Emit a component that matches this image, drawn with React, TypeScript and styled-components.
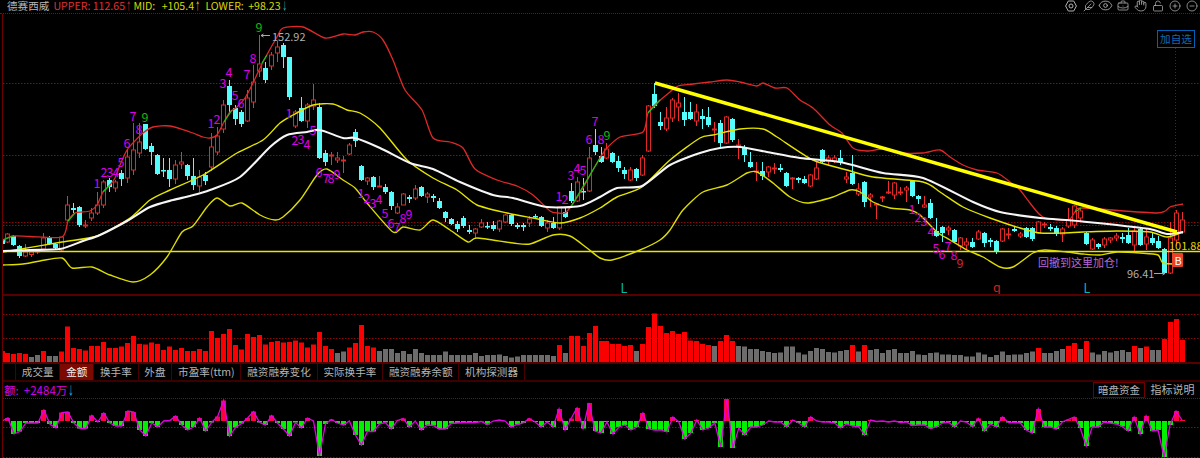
import React from 'react'
import styled, { createGlobalStyle } from 'styled-components'
import { Eye, Feather, Hand, LockOpen, BriefcaseBusiness, CirclePlus, CircleMinus } from 'lucide-react'

const FONT = '"Noto Sans CJK SC", "Noto Sans", sans-serif'
const GRID = '#8a0a0a'
const CYAN = '#54fcfc'
const RED = '#e02828'

// candle x in the picture
const barX = (i: number) => 1.5 + 5.99 * i

// high, body top, body bottom, low, up(1)/down(0) - screen y, not prices
type Candle = [number, number, number, number, number]
const candles: Candle[] = [
  [236, 240, 244, 246, 0], [233, 234, 242, 243, 1], [235, 236, 245, 246, 0], [245, 246, 256, 258, 0],
  [244, 252, 256, 257, 1], [250, 252, 254.5, 257, 1], [249, 251, 252, 254, 1], [233, 238, 249, 250, 1],
  [236, 237, 244, 245, 0], [243, 244, 248, 249, 0], [237, 237, 250, 252, 1], [196, 205, 220, 221, 1],
  [203, 208, 210, 213, 0], [206, 207, 225, 227, 0], [220, 225, 226, 228, 1], [208, 213, 218, 221, 1],
  [192, 205, 213, 215, 1], [180, 182, 205, 208, 1], [178, 180, 187, 192, 0], [180, 182, 188, 192, 1],
  [170, 173, 179, 186, 0], [149, 157, 178, 183, 1], [123, 150, 170, 175, 1], [123, 142, 153, 158, 1],
  [124, 124, 149, 150, 0], [143, 146, 152, 165, 0], [154, 155, 174, 175, 0], [158, 170, 171, 177, 0],
  [158, 170, 179, 187, 0], [160, 165, 179, 184, 1], [152, 162, 164, 169, 1], [164, 165, 176, 180, 0],
  [158, 176, 185, 190, 0], [170, 177, 186, 192, 1], [172, 175, 181, 185, 0], [133, 147, 167, 171, 1],
  [127, 136, 152, 155, 1], [100, 105, 129, 133, 1], [80, 86, 105, 112, 0], [105, 108, 119, 125, 0],
  [110, 112, 124, 127, 0], [90, 98, 121, 122, 1], [65, 82, 102, 108, 1], [35, 64, 71, 77, 1],
  [62, 68, 80, 83, 0], [52, 55, 66, 70, 1], [41, 47, 53, 62, 1], [43, 45, 57, 68, 0],
  [57, 57, 97, 100, 0], [110, 112, 126, 128, 1], [97, 108, 121, 122, 0], [103, 105, 121, 128, 1],
  [84, 100, 106, 110, 1], [103, 107, 158, 159, 0], [150, 153, 162, 166, 0], [152, 155, 156, 165, 1],
  [152, 158, 160, 163, 1], [156, 160, 161, 173, 1], [143, 145, 154, 155, 1], [129, 132, 141, 147, 0],
  [165, 166, 180, 181, 0], [177, 178, 181, 185, 1], [176, 177, 187, 190, 0], [176, 186, 187, 187, 1],
  [184, 187, 192, 194, 0], [191, 192, 206, 210, 0], [203, 207, 213, 214, 1], [193, 194, 205, 205, 1],
  [195, 197, 199, 203, 0], [185, 189, 198, 200, 1], [186, 187, 196, 197, 0], [192, 194, 197, 203, 1],
  [194, 196, 198, 202, 0], [198, 201, 208, 209, 0], [211, 212, 218, 222, 0], [218, 219, 224, 225, 0],
  [221, 224, 229, 232, 0], [216, 218, 226, 228, 0], [225, 230, 232, 234, 0], [228, 229, 233, 238, 1],
  [219, 223, 227, 228, 1], [222, 226, 227, 229, 0], [221, 225, 229, 231, 0], [220, 221, 229, 232, 1],
  [214, 215, 222, 223, 1], [214, 215, 224, 226, 0], [223, 225, 227, 229, 0], [223, 225, 227, 231, 0],
  [216, 219, 223, 227, 1], [214, 216, 217, 219, 0], [216, 217, 226, 227, 0], [220, 223, 228, 232, 1],
  [217, 223, 228, 229, 0], [207, 207, 228, 230, 1], [207, 212, 217, 218, 0], [183, 191, 201, 203, 0],
  [177, 182, 201, 202, 1], [178, 191, 192, 200, 0], [147, 158, 191, 192, 1], [129, 145, 152, 155, 0],
  [147, 156, 162, 163, 0], [143, 149, 158, 159, 1], [152, 153, 162, 163, 0], [156, 161, 168, 172, 0],
  [167, 170, 174, 179, 0], [167, 170, 180, 181, 1], [168, 169, 178, 181, 0], [155, 158, 175, 176, 1],
  [105, 106, 151, 152, 1], [83, 94, 106, 108, 0], [112, 122, 126, 130, 0], [107, 118, 129, 131, 1],
  [98, 100, 118, 122, 1], [93, 103, 107, 121, 1], [97, 112, 120, 126, 0], [102, 112, 119, 120, 0],
  [104, 112, 121, 126, 1], [109, 116, 119, 129, 0], [107, 117, 125, 127, 0], [122, 129, 130, 142, 1],
  [120, 123, 143, 147, 0], [116, 117, 143, 144, 1], [118, 119, 140, 142, 0], [139, 145, 146, 159, 1],
  [145, 148, 155, 162, 0], [152, 162, 167, 168, 0], [162, 171, 172, 181, 1], [162, 171, 176, 180, 0],
  [166, 167, 172, 177, 1], [163, 168, 169, 174, 1], [164, 168, 170, 172, 0], [172, 173, 186, 187, 0],
  [177, 178, 179, 189, 1], [177, 178, 180, 183, 0], [176, 179, 183, 184, 0], [174, 175, 186, 187, 1],
  [161, 168, 179, 180, 1], [149, 150, 162, 163, 0], [155, 158, 161, 166, 1], [155, 158, 161, 163, 1],
  [150, 158, 162, 165, 0], [172, 177, 179, 183, 1], [155, 173, 184, 185, 0], [183, 189, 194, 196, 1],
  [181, 182, 202, 207, 0], [193, 195, 197, 207, 1], [203, 204, 205, 219, 1], [196, 197, 198, 202, 1],
  [181, 192, 193, 194, 1], [182, 183, 195, 199, 1], [187, 192, 193, 195, 1], [186, 188, 190, 202, 1],
  [180, 181, 196, 197, 0], [195, 196, 199, 204, 0], [196, 205, 207, 208, 1], [199, 203, 218, 219, 0],
  [218, 231, 236, 237, 0], [226, 227, 233, 242, 0], [226, 228, 230, 235, 1], [229, 230, 242, 243, 0],
  [237, 238, 246, 250, 1], [238, 242, 245, 250, 1], [238, 242, 247, 248, 0], [230, 232, 239, 240, 1],
  [232, 233, 243, 247, 0], [238, 240, 242, 247, 0], [240, 241, 251, 254, 0], [228, 229, 241, 242, 1],
  [228, 234, 235, 239, 1], [227, 229, 231, 232, 0], [232, 234, 236, 238, 1], [227, 228, 237, 238, 0],
  [227, 228, 239, 241, 0], [221, 222, 233, 234, 1], [222, 224, 225, 228, 1], [224, 227, 229, 231, 0],
  [226, 228, 234, 236, 0], [227, 229, 234, 242, 1], [208, 220, 226, 228, 1], [205, 206, 225, 228, 1],
  [208, 211, 218, 222, 1], [232, 233, 244, 245, 0], [238, 240, 249, 250, 1], [243, 244, 247, 249, 0],
  [237, 239, 245, 248, 1], [237, 238, 240, 243, 1], [233, 236, 238, 241, 1], [233, 237, 239, 243, 0],
  [228, 235, 243, 244, 0], [228, 231, 245, 252, 1], [228, 229, 245, 246, 0], [228, 237, 244, 250, 1],
  [232, 238, 243, 245, 0], [236, 241, 248, 249, 0], [248, 249, 273, 274, 0], [222, 238, 273, 274, 1],
  [210, 213, 240, 246, 1], [212, 220, 232, 234, 1],
]

// volume bar heights, r = red, otherwise grey
const volumes = [
  '11r', '9r', '8r', '9r', '8r', '5', '7', '11r', '6', '6', '10.5r', '35.5r', '14r', '13r', '11.5r', '16r', '16r', '20r', '14r', '14r',
  '15.5r', '19r', '26r', '18r', '17.5r', '19.5r', '18r', '12r', '15.5r', '12r', '14r', '11r', '11r', '13r', '11r', '31r', '24r', '28r', '33r', '17r',
  '12.5r', '28r', '25r', '27r', '17.5r', '20r', '21r', '19.5r', '20r', '21.5r', '19.5r', '14.5r', '17.5r', '30r', '16r', '13r', '9', '10.5', '14.5r', '19r',
  '37r', '16r', '14.5r', '11', '13', '13', '9', '11', '8', '13', '9', '7', '7', '7', '10.5', '7', '7', '7', '7', '9',
  '6', '7', '7', '7.5', '6', '4.5', '5.5', '7', '7', '7', '7', '7', '6', '17r', '9', '26r', '26r', '16r', '29r', '36r',
  '21r', '21r', '18r', '18r', '16r', '17r', '11', '18r', '35r', '48.5r', '36r', '29r', '31r', '28r', '30r', '21.5r', '21r', '18r', '17r', '16',
  '21r', '27r', '21r', '16', '15.5', '13', '13', '11', '10', '9', '9.5', '15.5', '15.5', '9.5', '7.5', '11', '14', '13', '10', '9.5',
  '11', '12', '17r', '10.5', '17r', '12', '13', '9', '12', '13', '9', '9', '11', '7.5', '7', '9', '9.5', '7.5', '7.5', '7',
  '7', '5.5', '5.5', '9.5', '7.5', '5', '7', '10.5', '7', '7.5', '7.5', '9', '10.5', '14r', '9', '9', '11', '13', '16r', '19r',
  '13', '21r', '9.5', '7.5', '11', '9.5', '11', '12', '10', '16r', '14', '15.5r', '12', '12', '23r', '40r', '43r', '22r',
]

// money flow, px above (+) or below (-) the zero line
const flow = [
  0, 3, -13, -10.5, -2, -2, -2, 11, -3, -7, 8.5, 9, -2, -7.5, -7.5, 5.5, -1, 8, -2, -5,
  -5, 10, 9, -9, -15, -2, -6, 0, 0.5, 5, -4, -9, -6, 3, -10, -1.5, 4.5, 20.5, -15, -6.5,
  -2.5, 3, 9.5, -1.5, -4, 5.5, -2, -8, -15, -1.5, -7, 3, 0, -35, -3, 1.5, -2, -4, 0, -14,
  -24, -10.5, -10.5, -3, -1.5, -8, 0.5, 2.5, -6, 0, -9, -4, -4.5, -8, -8, -2.5, -2, -1.5, -1.5, -1.5,
  -0.5, -3.5, 0, 1, 0, -6, -3.5, -2, 2.5, -1, -6, -1, -6, 12, -9, 2.5, 13, -7.5, 18, -10,
  -12, -1, -13, -6, -4, -9, -6, 8, -8, -9, -9, -11, 4, -1, -18, -12, 1, -9, -7, -2,
  -26, 23, -27, -7, -14, -6, -6, -4, 0, -1, -1, -6, 1, -2, -6, 4, 0, -1, -1, -2,
  -7, -3, -5, -5.5, -14, 1, -0.5, 0, -1, 0, -1.5, -1, -4.5, -4, -4, -7.5, -6, -2, -1, -6,
  0, -1, -5.5, 2.5, -10, -3, -6, 4, -1.5, -1.5, -2, -9, -12, 12, -6, -6, -8, -1, 1.5, 4,
  -7, -25, -6, -6, -1, -2, -3, -5.5, -10, 4, -13, 5, -10, -9, -36, -4, 10, 1,
]

const upperBand = '3,240 13,236 30,236.5 62,237 68,221 75,213 90,211 97,205 103,192 110,185 115,178 120,165 127,150 133,143 143,133 153,127 170,126 190,132 203,137 210,138 217,135 224,122 230,112 237,107 245,98 253,83 263,62 277,37 283,28 303,27 325,38 343,34 355,35 363,32 373,32 383,40 393,60 405,90 422,110 433,138 450,142 463,148 475,169 497,180 517,186 533,195 550,211 558,213 565,213 572,205 583,188 593,170 600,158 607,148 620,137 643,132 648,113 657,103 670,92 678,86 693,84 710,82 727,80 740,82 757,86 763,83 775,88 787,88 800,100 813,108 830,125 842,133 853,148 867,151 883,149 900,153 923,153 940,150 950,157 963,165 977,170 997,173 1010,182 1020,190 1030,203 1043,217 1068,220 1075,212 1083,208 1157,213 1170,207 1183,204'
const midBand = '3,251 30,250 60,249 83,241 100,235 127,221 150,207 173,200 190,196 210,190 240,177 270,147 287,135 307,132 320,130 343,138 355,138 380,148 410,163 433,169 460,182 493,195 513,198 547,207 580,206 600,197 617,188 642,186 670,165 700,153 720,148 740,147 767,152 800,158 840,162 883,173 923,178 973,202 1000,212 1040,218 1067,220 1087,222 1117,225 1150,229 1167,234 1183,232'
const innerBand = '3,252 62,242 97,236 130,218 150,200 170,190 203,175 237,153 263,140 280,123 293,115 313,105 333,104 347,110 360,113 380,128 407,160 433,178 457,190 477,205 507,213 533,218 560,223 580,218 600,208 617,197 642,187 670,160 700,138 713,135 740,129 763,129 777,137 813,160 847,170 873,177 923,182 940,192 963,207 990,218 1020,228 1040,233 1063,233 1083,232 1117,231 1150,232 1167,237 1183,232'
const lowerBand = '3,265 23,264 40,261 62,258 72,268 92,267 110,275 133,282 150,275 167,257 182,232 193,226 207,207 217,198 230,206 242,203 260,215 275,220 283,217 300,200 317,175 327,169 343,180 355,188 367,203 393,232 403,227 420,230 433,220 450,230 468,242 477,238 513,243 530,244 553,235 570,236 587,248 600,258 612,260 640,250 660,240 670,230 683,210 703,192 727,185 747,173 757,172 773,183 790,197 807,203 833,197 850,190 860,192 873,202 890,208 910,210 920,215 937,232 950,240 967,250 983,257 1000,267 1013,267 1033,253 1045,250 1067,252 1083,254 1100,255 1117,252 1140,253 1158,255 1163,263 1180,264'
const greenRuns = ['3,240 13,236', '68,221 75,213', '103,192 110,185', '224,122 232,110', '262,63 267,55', '572,205 600,158', '648,113 660,100', '1075,212 1081,208']

// x, y, digit - the nine-turn counts
const counts: [number, number, string][] = [
  [97, 182, '1'], [104, 171, '2'], [110, 171, '3'], [116, 171, '4'], [121, 161, '5'], [127, 142, '6'], [133, 115, '7'], [139, 128, '8'],
  [211, 122, '1'], [217, 118, '2'], [223, 82, '3'], [229, 71, '4'], [235, 94, '5'], [241, 102, '6'], [247, 73, '7'], [253, 57, '8'],
  [289, 112, '1'], [295, 139, '2'], [301, 138, '3'], [307, 143, '4'], [313, 129, '5'], [319, 171, '6'], [326, 177, '7'], [331, 177, '8'], [337, 173, '9'],
  [361, 192, '1'], [367, 197, '2'], [373, 202, '3'], [379, 198, '4'], [385, 212, '5'], [391, 222, '6'], [397, 226, '7'], [403, 217, '8'], [409, 213, '9'],
  [559, 195, '1'], [565, 198, '2'], [571, 174, '3'], [577, 167, '4'], [583, 169, '5'], [589, 138, '6'], [595, 120, '7'], [601, 138, '8'],
  [912, 208, '1'], [918, 216, '2'], [924, 220, '3'], [931, 230, '4'], [936, 247, '5'], [942, 253, '6'], [948, 245, '7'], [954, 254, '8'],
]
const greenNines: [number, number][] = [[145, 116], [259, 26], [607, 134]]

const tabs = ['成交量', '金额', '换手率', '外盘', '市盈率(ttm)', '融资融券变化', '实际换手率', '融资融券余额', '机构探测器']

// turns 'x,y x,y' into a soft curve so the bands don't look faceted
const smooth = (points: string) => {
  const p = points.split(' ').map(s => s.split(',').map(Number))
  let d = `M${p[0][0]} ${p[0][1]}`
  for (let i = 0; i < p.length - 1; i++) {
    const a = p[Math.max(i - 1, 0)]
    const b = p[i]
    const c = p[i + 1]
    const e = p[Math.min(i + 2, p.length - 1)]
    d += `C${b[0] + (c[0] - a[0]) / 8} ${b[1] + (c[1] - a[1]) / 8} ${c[0] - (e[0] - b[0]) / 8} ${c[1] - (e[1] - b[1]) / 8} ${c[0]} ${c[1]}`
  }
  return d
}

const GlobalStyle = createGlobalStyle`
  html, body {
    margin: 0;
    background: #000;
    overflow: hidden;
  }
`

const Page = styled.div`
  width: 1200px;
  height: 458px;
  display: flex;
  flex-direction: column;
  background: #000;
  font-family: ${FONT};
  overflow: hidden;
`

const Header = styled.div`
  height: 13px;
  flex: none;
  display: flex;
  align-items: flex-start;
  border-bottom: 1px dotted ${GRID};
  padding-left: 7px;
  font-size: 10.6px;
  line-height: 12px;
  white-space: nowrap;
`

const Title = styled.span`
  color: #b8b8b8;
  margin-right: 4px;
`

const Quote = styled.span<{ $color: string; $width: number; $spread: number }>`
  width: ${p => p.$width}px;
  color: ${p => p.$color};
  word-spacing: ${p => p.$spread}px;
`

const Arrow = styled.span<{ $color: string }>`
  display: inline-block;
  width: 5px;
  margin-left: 1px;
  color: ${p => p.$color};
  transform: scaleX(0.5);
  transform-origin: left center;
`

const Tools = styled.div`
  margin-left: auto;
  margin-right: -1px;
  display: flex;
  color: #b0b0b0;
`

const Tool = styled.div`
  width: 17.3px;
  height: 11px;
  display: flex;
  justify-content: center;
  align-items: center;
`

const Body = styled.div`
  flex: 1;
  margin-left: 2px;
  border-left: 1px solid #6a0000;
  display: flex;
  flex-direction: column;
`

const PricePanel = styled.div`
  position: relative;
  height: 280px;
  flex: none;
  border-bottom: 2px solid #560000;
`

const ChartSvg = styled.svg`
  display: block;
  width: 100%;
  height: 100%;
`

const WatchButton = styled.button`
  position: absolute;
  left: 1154px;
  top: 16px;
  width: 38px;
  height: 18px;
  padding: 0;
  background: #000;
  border: 1px solid #0062b4;
  color: #1268b0;
  font-family: ${FONT};
  font-size: 10.6px;
  line-height: 14px;
`

const Count = styled.text<{ $color?: string }>`
  fill: ${p => p.$color || '#dc00e8'};
  font-size: 12.5px;
  font-family: ${FONT};
  text-anchor: middle;
  dominant-baseline: central;
`

const PriceNote = styled.text<{ $color?: string }>`
  fill: ${p => p.$color || '#b0b0b0'};
  font-size: 11px;
  font-family: ${FONT};
  dominant-baseline: central;
`

const Band = styled.path<{ $color: string; $width: number }>`
  fill: none;
  stroke: ${p => p.$color};
  stroke-width: ${p => p.$width}px;
`

const VolumePanel = styled.div`
  height: 66px;
  flex: none;
  border-bottom: 2px solid #560000;
`

const TabBar = styled.div`
  height: 16px;
  flex: none;
  display: flex;
  padding-left: 12px;
  border-bottom: 2px solid #3c0000;
`

const Tab = styled.div<{ $active?: boolean }>`
  padding: 0 5.8px;
  border-left: 1px solid #4a0000;
  background: ${p => (p.$active ? '#7d0a02' : 'transparent')};
  color: ${p => (p.$active ? '#f0f0f0' : '#b4b4b4')};
  font-size: 10.6px;
  line-height: 16px;
  white-space: nowrap;

  &:last-child {
    border-right: 1px solid #4a0000;
  }
`

const FlowHead = styled.div`
  height: 16px;
  flex: none;
  display: flex;
  align-items: center;
  border-bottom: 1px dotted ${GRID};
  font-size: 11.5px;
`

const FlowValue = styled.span`
  color: #d800e0;
  padding-left: 1px;
  white-space: pre;
`

const HeadButton = styled.div<{ $boxed?: boolean }>`
  height: 16px;
  box-sizing: border-box;
  padding: 0 ${p => (p.$boxed ? 4 : 5.5)}px;
  border: ${p => (p.$boxed ? '1px solid #6e0000' : 'none')};
  color: #b4b4b4;
  font-size: ${p => (p.$boxed ? 10.5 : 11)}px;
  line-height: 14px;

  &:first-of-type {
    margin-left: auto;
  }
`

const FlowPanel = styled.div`
  flex: 1;
  min-height: 0;
`

const Dash = ({ y }: { y: number }) => (
  <line x1={3} x2={1200} y1={y} y2={y} stroke={GRID} strokeWidth={1} strokeDasharray="1.5 1.5" />
)

const CandleMark = ({ c, i }: { c: Candle; i: number }) => {
  const [hi, top, bot, lo, up] = c
  const x = Math.round(barX(i)) + 0.5
  const col = up ? RED : CYAN
  return (
    <g>
      <line x1={x} x2={x} y1={hi} y2={lo} stroke={up ? '#f03030' : CYAN} />
      {up ? (
        <rect x={x - 2} y={top} width={4} height={Math.max(bot - top, 1)} fill="#000" stroke={col} />
      ) : (
        <rect x={x - 2.5} y={top} width={5} height={Math.max(bot - top, 1.5)} fill={col} />
      )}
    </g>
  )
}

const PriceChart = () => (
  <ChartSvg viewBox="3 14 1197 280">
    <Dash y={83.5} />
    <Dash y={155.5} />
    <Dash y={222.5} />
    <Dash y={225.5} />
    <line x1={1175.5} x2={1175.5} y1={48} y2={212} stroke="#0b3a5c" strokeDasharray="1 2" />
    {candles.map((c, i) => (
      <CandleMark key={i} c={c} i={i} />
    ))}
    <line x1={3} x2={1200} y1={251.5} y2={251.5} stroke="#e6e600" strokeWidth={1.4} />
    <Band d={smooth(upperBand)} $color="#e02828" $width={1.3} />
    {greenRuns.map(r => (
      <polyline key={r} points={r} fill="none" stroke="#14c814" strokeWidth={1.2} />
    ))}
    <Band d={smooth(innerBand)} $color="#e4e400" $width={1.4} />
    <Band d={smooth(lowerBand)} $color="#dcdc00" $width={1.4} />
    <Band d={smooth(midBand)} $color="#f6f6f6" $width={2.1} />
    <line x1={655} y1={83} x2={1177} y2={232} stroke="#ffff00" strokeWidth={3.4} />
    {counts.map(([x, y, d]) => (
      <Count key={`${x}-${y}`} x={x} y={y}>{d}</Count>
    ))}
    {greenNines.map(([x, y]) => (
      <Count key={x} x={x} y={y} $color="#0eb80e">9</Count>
    ))}
    <Count x={960} y={262} $color="#c8283c">9</Count>
    <Count x={624} y={287} $color="#00b8b8">L</Count>
    <Count x={997} y={286} $color="#d02020">q</Count>
    <Count x={1087} y={287} $color="#00b8b8">L</Count>
    <path d="M261 35.5h9M261 35.5l2.5-1.5M261 35.5l2.5 1.5" stroke="#a8a8a8" fill="none" />
    <PriceNote x={272} y={36}>152.92</PriceNote>
    <PriceNote x={1127} y={273}>96.41</PriceNote>
    <path d="M1154 273.5h11M1165 273.5l-2.5-1.5M1165 273.5l-2.5 1.5" stroke="#a8a8a8" fill="none" />
    <PriceNote x={1169} y={245} $color="#e0d400">101.88</PriceNote>
    <PriceNote x={1038} y={262} $color="#b868d8">回撤到这里加仓!</PriceNote>
    <rect x={1172} y={253} width={11} height={14} rx={1} fill="#ea4228" />
    <PriceNote x={1174.5} y={260} $color="#fff">B</PriceNote>
  </ChartSvg>
)

const VolumeChart = () => (
  <ChartSvg viewBox="3 296 1197 66">
    <Dash y={314.5} />
    <Dash y={338.5} />
    {volumes.map((v, i) => {
      const h = parseFloat(v)
      return (
        <rect
          key={i}
          x={Math.round(barX(i)) - 2}
          y={362 - h}
          width={5}
          height={h}
          fill={v.endsWith('r') ? '#fa0000' : '#6c6c6c'}
        />
      )
    })}
  </ChartSvg>
)

const FlowChart = () => {
  const zero = 421
  const line = flow.map((v, i) => `${barX(i) + 0.5},${zero - v}`).join(' ')
  return (
    <ChartSvg viewBox="3 399 1197 59">
      <Dash y={427.5} />
      <Dash y={457.5} />
      {flow.map((v, i) => (
        <rect
          key={i}
          x={Math.round(barX(i)) - 2}
          y={v > 0 ? zero - v : zero}
          width={5}
          height={Math.abs(v)}
          fill={v > 0 ? '#ff0040' : '#00f000'}
        />
      ))}
      <polyline points={line} fill="none" stroke="#e400e4" strokeWidth={1.3} />
    </ChartSvg>
  )
}

const HexIcon = () => (
  <svg width="12" height="12" viewBox="0 0 12 12" fill="none" stroke="currentColor" strokeWidth="1">
    <path d="M3.3 1h5.4L11.4 6 8.7 11H3.3L.6 6z" />
    <circle cx="6" cy="6" r="2" />
  </svg>
)

export default function App() {
  return (
    <Page>
      <GlobalStyle />
      <Header>
        <Title>德赛西威</Title>
        <Quote $width={80} $spread={0} $color="#e03030">UPPER: 112.65<Arrow $color="#e03030">↑</Arrow></Quote>
        <Quote $width={72} $spread={4} $color="#d8d800">MID: +105.4<Arrow $color="#d8d800">↑</Arrow></Quote>
        <Quote $width={84} $spread={2} $color="#d8d800">LOWER: +98.23<Arrow $color="#3cc8c8">↓</Arrow></Quote>
        <Tools>
          <Tool><HexIcon /></Tool>
          <Tool><Feather size={12} strokeWidth={1.5} /></Tool>
          <Tool><Eye size={15} strokeWidth={1.4} /></Tool>
          <Tool><BriefcaseBusiness size={12} strokeWidth={1.5} /></Tool>
          <Tool><Hand size={13} strokeWidth={1.5} /></Tool>
          <Tool><LockOpen size={12} strokeWidth={1.5} /></Tool>
          <Tool><CirclePlus size={12} strokeWidth={1.5} /></Tool>
          <Tool><CircleMinus size={12} strokeWidth={1.5} /></Tool>
        </Tools>
      </Header>
      <Body>
        <PricePanel>
          <PriceChart />
          <WatchButton>加自选</WatchButton>
        </PricePanel>
        <VolumePanel>
          <VolumeChart />
        </VolumePanel>
        <TabBar>
          {tabs.map(t => (
            <Tab key={t} $active={t === '金额'}>{t}</Tab>
          ))}
        </TabBar>
        <FlowHead>
          <FlowValue>额:  +2484万<Arrow $color="#3cc8e8">↓</Arrow></FlowValue>
          <HeadButton $boxed>暗盘资金</HeadButton>
          <HeadButton>指标说明</HeadButton>
        </FlowHead>
        <FlowPanel>
          <FlowChart />
        </FlowPanel>
      </Body>
    </Page>
  )
}
